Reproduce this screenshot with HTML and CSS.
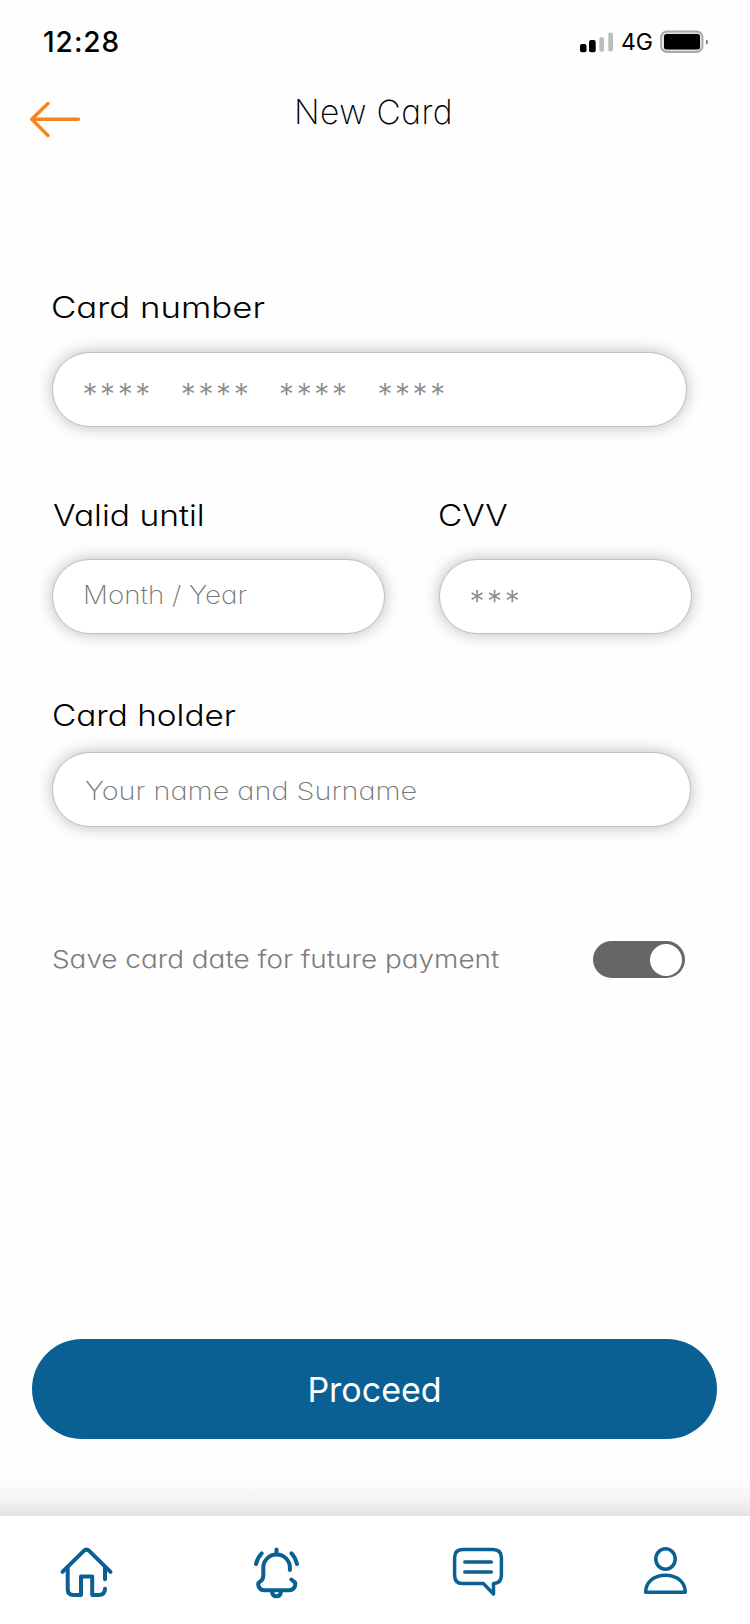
FILE: index.html
```html
<!DOCTYPE html>
<html lang="en">
<head>
<meta charset="utf-8">
<title>New Card</title>
<link rel="stylesheet" href="styles.css">
</head>
<body>
<div class="screen">
  <div class="status">
    <span class="time">12:28</span>
    <svg class="signal" width="34" height="22" viewBox="580 31 34 22">
      <rect x="580" y="44" width="6.5" height="8.3" rx="2"/>
      <rect x="589" y="40" width="6.7" height="12.3" rx="2"/>
      <rect x="599.3" y="37" width="4.7" height="14.7" rx="2" fill="#bdbdbd"/>
      <rect x="608.3" y="32.5" width="4.7" height="19" rx="2" fill="#bdbdbd"/>
    </svg>
    <span class="network">4G</span>
    <svg class="battery" width="50" height="24" viewBox="659 30 50 24">
      <rect x="661" y="31.5" width="41.5" height="20.5" rx="6" fill="#e2e2e2" stroke="#a8a8a8" stroke-width="1.8"/>
      <rect x="664" y="34" width="36" height="15.6" rx="2.5"/>
      <path d="M706 39.5q2 .5 2 2.5t-2 2.5z" fill="#777"/>
    </svg>
  </div>
  <header class="header">
    <svg class="back" width="52" height="38" viewBox="29 100 52 38">
      <path d="M48 103.5L31.7 119.3L48 135.5M32 119.3H78.5"/>
    </svg>
    <h1 class="title">New Card</h1>
  </header>
  <main class="form">
    <div class="field number">
      <label class="label l-number">Card number</label>
      <div class="box w-number stars"><span>****</span><span>****</span><span>****</span><span>****</span></div>
    </div>
    <div class="row">
      <div class="field">
        <label class="label l-valid">Valid until</label>
        <div class="box w-valid"><span class="hint h-valid">Month / Year</span></div>
      </div>
      <div class="field">
        <label class="label l-cvv">CVV</label>
        <div class="box w-cvv stars"><span>***</span></div>
      </div>
    </div>
    <div class="field holder">
      <label class="label l-holder">Card holder</label>
      <div class="box w-holder"><span class="hint h-holder">Your name and Surname</span></div>
    </div>
    <div class="save">
      <span class="save-text">Save card date for future payment</span>
      <div class="toggle"><div class="knob"></div></div>
    </div>
  </main>
  <button class="proceed"><span>Proceed</span></button>
  <div class="shade"></div>
  <nav class="nav">
    <svg class="icon home" width="60" height="60" viewBox="56 1542 60 60">
      <path d="M62.5 1571.8L83.8 1550.8Q86.5 1548.5 89.2 1550.8L110.5 1571.8"/>
      <path d="M67.7 1568V1589Q67.7 1595 73.5 1595H81V1576.5H92.2V1595H98.5Q105 1595 105 1588.8M105 1568V1579.3"/>
    </svg>
    <svg class="icon bell" width="60" height="60" viewBox="246 1542 60 60">
      <path d="M276.5 1549.5V1554M289.9 1570V1567.5A13.3 13 0 0 0 263.3 1567.5V1575Q263.3 1579.5 260.5 1581.3Q257.3 1583 258.5 1586Q260 1590.3 264.5 1590.3H288.5Q293.5 1590.3 295 1586Q296.2 1582.5 293.5 1581.3L291.3 1579.5"/>
      <path d="M272 1591.5Q272.5 1596.3 276.5 1596.3Q280.5 1596.3 281 1591.5M261.7 1553.3Q257.5 1557.5 256 1564M291.5 1553.3Q295.5 1557.5 297 1564"/>
    </svg>
    <svg class="icon chat" width="60" height="60" viewBox="448 1542 60 60">
      <path d="M462.5 1549.6H493Q501.4 1549.6 501.4 1558V1575Q501.4 1583.5 493.5 1583.5V1594L483.5 1583.6H462.5Q454.6 1583.6 454.6 1575V1558Q454.6 1549.6 462.5 1549.6Z"/>
      <path d="M464.8 1562.1H491.3M464.8 1571.9H491.3"/>
    </svg>
    <svg class="icon user" width="60" height="60" viewBox="636 1542 60 60">
      <ellipse cx="665.5" cy="1559" rx="9.7" ry="10.3"/>
      <path d="M645.6 1592.3C645.6 1583 653 1575.2 665.5 1575.2S685.3 1583 685.3 1592.3Z"/>
    </svg>
  </nav>
</div>
</body>
</html>
```
FILE: styles.css
```css
* { box-sizing: border-box; }
body { margin: 0; background: #fefefe; font-family: Inter, "Liberation Sans", sans-serif; font-feature-settings: "cv11"; color: #000; }
.screen { width: 750px; height: 1624px; display: flex; flex-direction: column; overflow: hidden; }
.status { height: 84px; flex: none; display: flex; align-items: center; padding-left: 43px; }
.time { font-size: 28px; font-weight: 500; letter-spacing: 1px; width: 537px; }
.network { font-size: 23px; margin-left: 7px; width: 38px; white-space: nowrap; }
.header { height: 70px; flex: none; display: flex; padding: 0 0 0 29px; }
.back { margin-top: 16px; fill: none; stroke: #f5861f; stroke-width: 3.4; stroke-linecap: round; stroke-linejoin: round; }
.title { margin: 8px 0 0 213px; font-size: 33.5px; line-height: 40px; font-weight: 250; letter-spacing: 0.4px; white-space: nowrap; }
.form { flex: none; height: 1185px; padding: 132px 0 0 52px; }
.field { display: flex; flex-direction: column; }
.label { align-self: flex-start; font-size: 29.5px; line-height: 40px; font-weight: 300; letter-spacing: 0; white-space: nowrap; margin-bottom: 26px; transform-origin: left center; }
.l-number { transform: translate(-1px, 1px) scaleX(1.18); }
.l-valid { transform: translate(1px, 2px) scaleX(1.138); }
.l-cvv { transform: translate(-1px, 2px) scaleX(1.13); }
.l-holder { transform: translateY(1px) scaleX(1.13); }
.box { height: 75px; border: 1px solid #bfbfbf; border-radius: 38px; background: #fff; box-shadow: 0 0 16px rgba(0,0,0,.27); display: flex; align-items: center; padding-left: 32px; }
.w-number { width: 635px; }
.w-valid { width: 333px; }
.w-cvv { width: 253px; }
.w-holder { width: 639px; }
.row { display: flex; gap: 54px; margin-top: 66px; }
.holder { margin-top: 60px; }
.holder .label { margin-bottom: 18px; }
.hint { font-size: 25px; line-height: 30px; font-weight: 200; color: #777; white-space: nowrap; transform-origin: left center; }
.h-valid { margin: -4px 0 0 -2px; transform: scaleX(1.11); }
.h-holder { margin-top: 2px; transform: scaleX(1.155); }
.box.stars { color: #8a8a8a; font-size: 30px; font-weight: 300; padding-left: 29.5px; }
.stars span { width: 98.3px; letter-spacing: 2.6px; padding-top: 9px; }
.save { display: flex; height: 37px; margin-top: 114px; align-items: center; }
.save-text { width: 541px; font-size: 24px; font-weight: 300; color: #7c7c7c; white-space: nowrap; letter-spacing: 0; transform: scaleX(1.161); transform-origin: left center; }
.toggle { flex: none; width: 92px; height: 37px; border-radius: 19px; background: #666; display: flex; align-items: center; justify-content: flex-end; padding-right: 3px; }
.knob { width: 32px; height: 32px; border-radius: 50%; background: #fff; }
.proceed { flex: none; width: 685px; height: 100px; margin-left: 32px; border: 0; border-radius: 50px; background: #0a6092; color: #fff; font: 400 34px Inter, sans-serif; padding: 0; }
.shade { flex: none; height: 41px; margin-top: 36px; background: linear-gradient(#fefefe, #f4f4f4 60%, #e3e3e3); }
.nav { flex: none; height: 108px; background: #fff; display: flex; padding: 26px 0 0 56px; }
.icon { fill: none; stroke: #0a6092; stroke-width: 4; stroke-linecap: round; stroke-linejoin: round; }
.bell { margin-left: 130px; }
.chat { margin-left: 142px; stroke-width: 3.5; }
.user { margin-left: 128px; stroke-width: 3.5; }
```
